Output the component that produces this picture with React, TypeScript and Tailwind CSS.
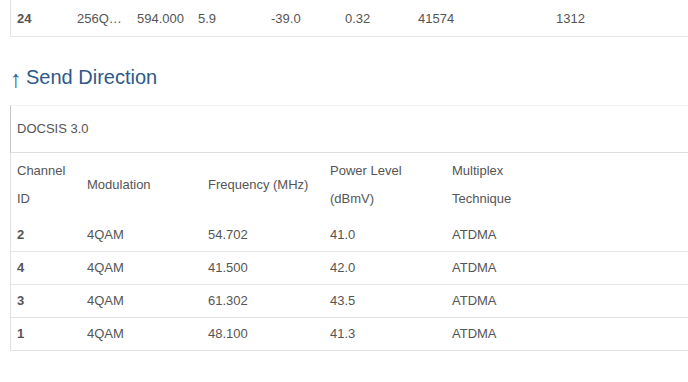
import React from "react";

// Upstream channel table, as shown on the cable-modem status page.
const TOP_ROW = ["24", "256Q…", "594.000", "5.9", "-39.0", "0.32", "41574", "1312"];
const TOP_WIDTHS = ["w-[60px]", "w-[60px]", "w-[61px]", "w-[73px]", "w-[74px]", "w-[73px]", "w-[138px]", "flex-1"];

const COLS = ["w-[70px]", "w-[121px]", "w-[122px]", "w-[122px]", "flex-1"];

const UPSTREAM = [
  { id: "2", mod: "4QAM", freq: "54.702", power: "41.0", mux: "ATDMA" },
  { id: "4", mod: "4QAM", freq: "41.500", power: "42.0", mux: "ATDMA" },
  { id: "3", mod: "4QAM", freq: "61.302", power: "43.5", mux: "ATDMA" },
  { id: "1", mod: "4QAM", freq: "48.100", power: "41.3", mux: "ATDMA" },
];

export default function App() {
  return (
    <div
      className="w-[688px] h-[382px] overflow-hidden bg-white pl-[10px] text-[13px] text-[#555]"
      style={{ fontFamily: '"Liberation Sans", Arial, sans-serif' }}
    >
      {/* tail of the downstream table */}
      <div className="flex items-center h-[37px] pt-[2px] border-l border-b border-[#e2e2e2] pl-[6px]">
        {TOP_ROW.map((v, i) => (
          <div key={i} className={`${TOP_WIDTHS[i]} ${i === 0 ? "font-bold" : ""} whitespace-nowrap`}>
            {v}
          </div>
        ))}
      </div>

      <h2 className="mt-[27px] h-[26px] flex items-center text-[20px] leading-none text-[#2d5a87]">
        <span className="mr-[4px] text-[24px] leading-none mt-[3px]">↑</span>Send Direction
      </h2>

      <div className="mt-[15px] border-l border-[#e2e2e2]">
        <div className="h-[48px] flex items-center pl-[6px] border-t border-[#f3f3f3] border-b border-b-[#dedede] border-l border-l-[#c8c8c8] -ml-px">
          DOCSIS 3.0
        </div>

        <div className="flex items-center h-[66px] pl-[6px] pb-[2px]">
          <div className={`${COLS[0]} leading-[28px]`}>
            Channel
            <br />
            ID
          </div>
          <div className={COLS[1]}>Modulation</div>
          <div className={COLS[2]}>Frequency (MHz)</div>
          <div className={`${COLS[3]} leading-[28px]`}>
            Power Level
            <br />
            (dBmV)
          </div>
          <div className={`${COLS[4]} leading-[28px]`}>
            Multiplex
            <br />
            Technique
          </div>
        </div>

        {UPSTREAM.map((r) => (
          <div key={r.id} className="flex items-center h-[33px] pl-[6px] border-b border-[#e2e2e2]">
            <div className={`${COLS[0]} font-bold`}>{r.id}</div>
            <div className={COLS[1]}>{r.mod}</div>
            <div className={COLS[2]}>{r.freq}</div>
            <div className={COLS[3]}>{r.power}</div>
            <div className={COLS[4]}>{r.mux}</div>
          </div>
        ))}
      </div>
    </div>
  );
}
